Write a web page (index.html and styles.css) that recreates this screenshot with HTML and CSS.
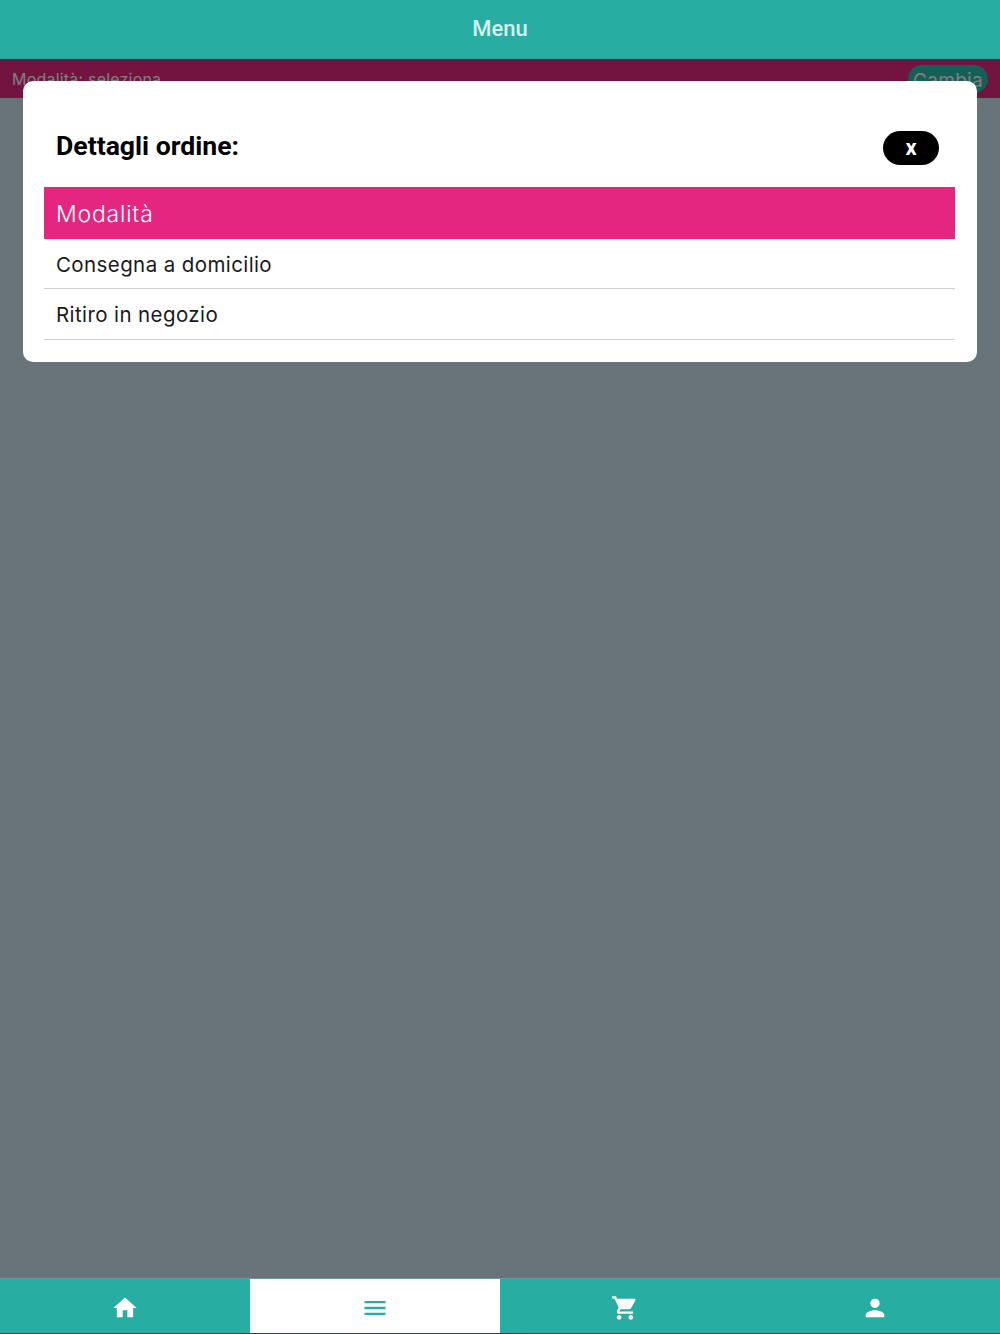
FILE: index.html
```html
<!DOCTYPE html>
<html lang="en">
<head>
    <meta charset="UTF-8">
    <meta name="viewport" content="width=device-width, initial-scale=1.0">
    <title>Menu</title>
    <link rel="stylesheet" href="styles.css">
</head>
<body>
    <div class="app">
        <header class="top-bar">Menu</header>
        <main class="content">
            <div class="mode-bar">
                <span>Modalità: seleziona</span>
                <span class="change-btn">Cambia</span>
            </div>
            <div class="overlay">
                <div class="modal">
                    <div class="modal-head">
                        <h2>Dettagli ordine:</h2>
                        <button class="close-btn">x</button>
                    </div>
                    <div class="list-title">Modalità</div>
                    <div class="list-item">Consegna a domicilio</div>
                    <div class="list-item">Ritiro in negozio</div>
                </div>
            </div>
        </main>
        <nav class="tabs">
            <div class="tab">
                <svg viewBox="0 0 24 24"><path d="M10 20v-6h4v6h5v-8h3L12 3 2 12h3v8z"/></svg>
            </div>
            <div class="tab active">
                <svg viewBox="0 0 24 24"><path d="M3 18h18v-2H3v2zm0-5h18v-2H3v2zm0-7v2h18V6H3z"/></svg>
            </div>
            <div class="tab">
                <svg viewBox="0 0 24 24"><path d="M7 18c-1.1 0-1.99.9-1.99 2S5.900 22 7 22s2-.9 2-2-.9-2-2-2zM1 2v2h2l3.600 7.590-1.350 2.450c-.16.28-.25.61-.25.96 0 1.100.9 2 2 2h12v-2H7.420c-.14 0-.25-.11-.25-.25l.03-.12.9-1.630h7.450c.75 0 1.410-.41 1.750-1.030l3.580-6.490c.08-.14.12-.31.12-.48 0-.55-.45-1-1-1H5.210l-.94-2H1zm16 16c-1.100 0-1.990.9-1.990 2s.89 2 1.990 2 2-.9 2-2-.9-2-2-2z"/></svg>
            </div>
            <div class="tab">
                <svg viewBox="0 0 24 24"><path d="M12 12c2.210 0 4-1.790 4-4s-1.790-4-4-4-4 1.790-4 4 1.790 4 4 4zm0 2c-2.670 0-8 1.340-8 4v2h16v-2c0-2.660-5.330-4-8-4z"/></svg>
            </div>
        </nav>
    </div>
</body>
</html>
```

FILE: styles.css
```css
* {
    box-sizing: border-box;
}
body {
    margin: 0;
    background: #1c4a46;
    font-family: "Inter", "DejaVu Sans", sans-serif;
}
.app {
    display: flex;
    flex-direction: column;
    height: 1333px;
}
.top-bar {
    height: 59px;
    flex: none;
    display: flex;
    justify-content: center;
    align-items: center;
    padding-bottom: 2px;
    background: #27ada1;
    color: #d5f1ee;
    font-family: "Roboto", sans-serif;
    font-size: 22px;
    font-weight: 500;
}
.content {
    flex: 1;
    position: relative;
    background: #d0e8f4;
}
.mode-bar {
    height: 39px;
    display: flex;
    justify-content: space-between;
    align-items: center;
    padding: 1px 12px 0;
    background: #e42780;
    color: #fff;
    font-size: 16px;
    letter-spacing: 0.2px;
}
.change-btn {
    height: 28px;
    padding: 4px 5px 0;
    border-radius: 14px;
    background: #2cbcb0;
    font-size: 19px;
    letter-spacing: 0.3px;
}
.overlay {
    position: absolute;
    inset: 0;
    background: rgba(0, 0, 0, 0.5);
    padding: 22px 23px 0;
}
.modal {
    height: 281px;
    padding: 0 22px 0 21px;
    background: #fff;
    border-radius: 10px;
}
.modal-head {
    height: 106px;
    display: flex;
    justify-content: space-between;
    align-items: center;
    padding: 27px 16px 0 12px;
}
.modal-head h2 {
    margin: 0 0 5px;
    color: #000;
    font-family: "Roboto", sans-serif;
    font-size: 26.6px;
    font-weight: 700;
}
.close-btn {
    width: 56px;
    height: 34px;
    border: 0;
    border-radius: 17px;
    background: #000;
    color: #fff;
    font-family: "Roboto", sans-serif;
    font-size: 22px;
    font-weight: 700;
    padding: 0;
}
.list-title {
    height: 52px;
    display: flex;
    align-items: center;
    padding: 1px 0 0 12px;
    background: #e52680;
    color: #fff;
    font-size: 23px;
    font-weight: 300;
    letter-spacing: 0.8px;
}
.list-item {
    height: 50.4px;
    display: flex;
    align-items: center;
    padding: 1px 0 0 12px;
    border-bottom: 1px solid #d0d0d0;
    color: #1a1a1a;
    font-size: 20.5px;
    letter-spacing: 0.4px;
}
.tabs {
    height: 55px;
    flex: none;
    display: flex;
    border-top: 1px solid #6a9a9c;
    background: #27ada1;
}
.tab {
    flex: 1;
    display: flex;
    justify-content: center;
    align-items: center;
    padding-top: 3px;
    fill: #fff;
}
.tab svg {
    width: 28px;
    height: 28px;
}
.tab.active {
    background: #fff;
    fill: #27ada1;
}
```
